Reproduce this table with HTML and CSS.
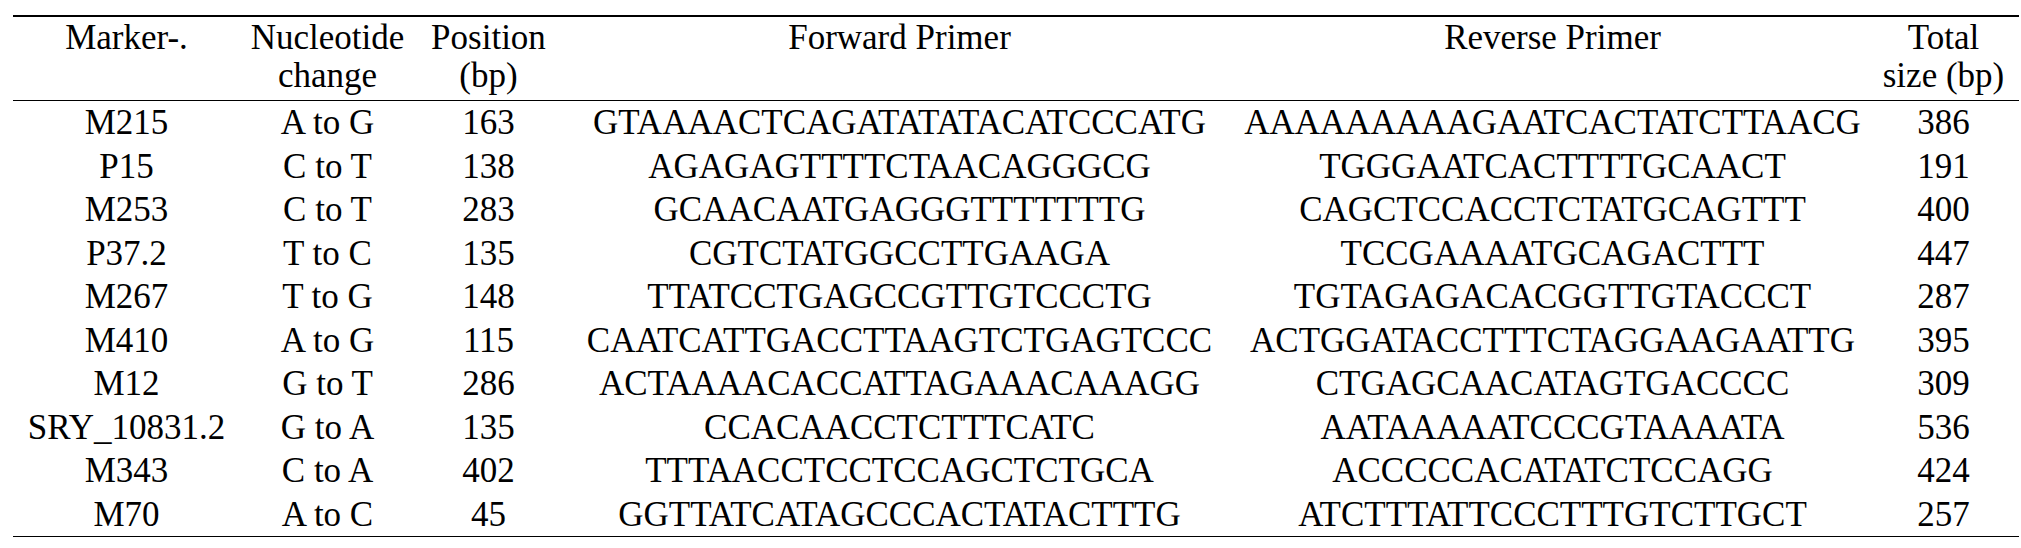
FILE: index.html
```html
<!DOCTYPE html>
<html lang="en">
<head>
<meta charset="utf-8">
<title>Y-SNP markers and primers</title>
<link rel="stylesheet" href="styles.css">
</head>
<body>
<table class="primers">
  <colgroup>
    <col class="c-marker">
    <col class="c-change">
    <col class="c-pos">
    <col class="c-fwd">
    <col class="c-rev">
    <col class="c-size">
  </colgroup>
  <thead>
    <tr>
      <th>Marker-.</th>
      <th>Nucleotide<br>change</th>
      <th>Position<br>(bp)</th>
      <th>Forward Primer</th>
      <th>Reverse Primer</th>
      <th>Total<br>size (bp)</th>
    </tr>
  </thead>
  <tbody>
    <tr><td>M215</td><td>A to G</td><td>163</td><td>GTAAAACTCAGATATATACATCCCATG</td><td>AAAAAAAAAGAATCACTATCTTAACG</td><td>386</td></tr>
    <tr><td>P15</td><td>C to T</td><td>138</td><td>AGAGAGTTTTCTAACAGGGCG</td><td>TGGGAATCACTTTTGCAACT</td><td>191</td></tr>
    <tr><td>M253</td><td>C to T</td><td>283</td><td>GCAACAATGAGGGTTTTTTTG</td><td>CAGCTCCACCTCTATGCAGTTT</td><td>400</td></tr>
    <tr><td>P37.2</td><td>T to C</td><td>135</td><td>CGTCTATGGCCTTGAAGA</td><td>TCCGAAAATGCAGACTTT</td><td>447</td></tr>
    <tr><td>M267</td><td>T to G</td><td>148</td><td>TTATCCTGAGCCGTTGTCCCTG</td><td>TGTAGAGACACGGTTGTACCCT</td><td>287</td></tr>
    <tr><td>M410</td><td>A to G</td><td>115</td><td>CAATCATTGACCTTAAGTCTGAGTCCC</td><td>ACTGGATACCTTTCTAGGAAGAATTG</td><td>395</td></tr>
    <tr><td>M12</td><td>G to T</td><td>286</td><td>ACTAAAACACCATTAGAAACAAAGG</td><td>CTGAGCAACATAGTGACCCC</td><td>309</td></tr>
    <tr><td>SRY_10831.2</td><td>G to A</td><td>135</td><td>CCACAACCTCTTTCATC</td><td>AATAAAAATCCCGTAAAATA</td><td>536</td></tr>
    <tr><td>M343</td><td>C to A</td><td>402</td><td>TTTAACCTCCTCCAGCTCTGCA</td><td>ACCCCCACATATCTCCAGG</td><td>424</td></tr>
    <tr><td>M70</td><td>A to C</td><td>45</td><td>GGTTATCATAGCCCACTATACTTTG</td><td>ATCTTTATTCCCTTTGTCTTGCT</td><td>257</td></tr>
  </tbody>
</table>
</body>
</html>
```

FILE: styles.css
```css
html, body {
  margin: 0;
  padding: 0;
  background: #ffffff;
}

body {
  font-family: "Liberation Serif", "DejaVu Serif", serif;
  font-size: 35px;
  color: #000000;
}

.primers {
  margin: 15px 0 0 13px;
  width: 2006px;
  table-layout: fixed;
  border-collapse: collapse;
  border-top: 2px solid #000;
  border-bottom: 1px solid #000;
  font-family: "Liberation Serif", "DejaVu Serif", serif;
}

.c-marker { width: 227px; }
.c-change { width: 175px; }
.c-pos    { width: 147px; }
.c-fwd    { width: 675px; }
.c-rev    { width: 631px; }
.c-size   { width: 151px; }

.primers th,
.primers td {
  padding: 0;
  text-align: center;
  white-space: nowrap;
  font-weight: normal;
  font-family: "Liberation Serif", "DejaVu Serif", serif;
}

.primers th {
  vertical-align: top;
  line-height: 38px;
  padding-top: 2px;
  padding-bottom: 5px;
  border-bottom: 1px solid #000;
}

.primers td {
  line-height: 43.5px;
  vertical-align: middle;
}
```
